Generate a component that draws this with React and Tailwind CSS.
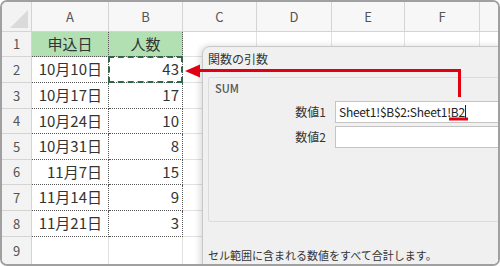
import React from "react";

const cols = ["A", "B", "C", "D", "E", "F", ""];
const rows = [
  ["10月10日", "43"],
  ["10月17日", "17"],
  ["10月24日", "10"],
  ["10月31日", "8"],
  ["11月7日", "15"],
  ["11月14日", "9"],
  ["11月21日", "3"],
];
const rowH = ["h-[25px]", "h-[26px]", "h-[26px]", "h-[25px]", "h-[26px]", "h-[25px]", "h-[26px]", "h-[26px]", "h-[28px]"];

const jp = "font-['Noto_Sans_CJK_JP',sans-serif]";

const Empty = () => <div className="border-r border-b border-[#e2e2e2] bg-white" />;

const Row = ({ n, h, children }) => (
  <div className="contents">
    <div className={`${h} flex items-center justify-center border-r border-b border-[#d4d4d4] bg-[#f3f3f3] text-[13px] text-[#555]`}>
      {n}
    </div>
    {children}
    <Empty />
    <Empty />
    <Empty />
    <Empty />
    <Empty />
  </div>
);

const Dialog = () => (
  <div className="absolute left-[200px] top-[44px] w-[320px] h-[240px] bg-[#f0f0f0] border border-[#c8c8c8] rounded-tl-[8px] shadow-[-2px_0_6px_rgba(0,0,0,0.15)] text-[#333]">
    <div className="h-[24px] pl-[5px] flex items-center text-[12px]">関数の引数</div>
    <div className="ml-[5px] mt-[6px] h-[145px] border border-[#dcdcdc] rounded-[2px]">
      <div className="pl-[6px] pt-[2px] text-[11px] text-[#555] font-medium">SUM</div>
      <div className="mt-[4px] flex flex-col gap-[3px]">
        <div className="flex items-center">
          <div className="w-[117px] text-right text-[12px]">数値1</div>
          <div className="ml-[9px] flex-1 h-[22px] bg-white border border-[#c4c4c4] pl-[3px] flex items-center text-[12px] tracking-[-0.25px] text-[#222]">
            Sheet1!$B$2:Sheet1!B2<span className="inline-block w-px h-[14px] bg-[#222]" />
          </div>
        </div>
        <div className="flex items-center">
          <div className="w-[117px] text-right text-[12px]">数値2</div>
          <div className="ml-[9px] flex-1 h-[22px] bg-white border border-[#c4c4c4]" />
        </div>
      </div>
    </div>
    <div className="pl-[5px] mt-[25px] text-[11px] text-[#333]">セル範囲に含まれる数値をすべて合計します。</div>
  </div>
);

const Arrow = () => (
  <svg className="absolute left-0 top-0 pointer-events-none" width="500" height="266" viewBox="0 0 500 266">
    <path d="M197 70.5 H459.5 V97" fill="none" stroke="#e00012" strokeWidth="3" />
    <polygon points="185,71 200,64.5 200,77.5" fill="#e00012" />
    <line x1="449" y1="119" x2="468" y2="119" stroke="#e00012" strokeWidth="3" />
  </svg>
);

export default function App() {
  return (
    <div className={`relative w-[500px] h-[266px] overflow-hidden bg-white ${jp}`}>
      <div className="relative w-full h-full border-2 border-[#a0a0a0] rounded-[7px] overflow-hidden">
        <div className="grid grid-cols-[30px_77px_74px_74px_75px_73px_75px_60px]">
          <div className="h-[30px] relative border-r border-b border-[#d4d4d4] bg-[#f3f3f3]">
            <div className="absolute right-[3px] bottom-[3px] w-0 h-0 border-l-[18px] border-l-transparent border-b-[18px] border-b-[#dadada]" />
          </div>
          {cols.map((c, i) => (
            <div key={i} className="h-[30px] flex items-center justify-center border-r border-b border-[#d4d4d4] bg-[#f7f7f7] text-[13px] text-[#555]">
              {c}
            </div>
          ))}
          <Row n="1" h={rowH[0]}>
            <div className="flex items-center justify-center bg-[#b2e0b2] border-r border-b border-dotted border-[#555] text-[15px] text-[#333]">申込日</div>
            <div className="flex items-center justify-center bg-[#b2e0b2] border-r border-b border-dotted border-[#555] text-[15px] text-[#333]">人数</div>
          </Row>
          {rows.map((r, i) => (
            <Row key={i} n={String(i + 2)} h={rowH[i + 1]}>
              <div className="flex items-center justify-end pr-[6px] bg-white border-r border-b border-dotted border-[#555] text-[15px] text-[#333]">{r[0]}</div>
              <div className={`flex items-center justify-end pr-[3px] bg-white border-r border-b border-dotted border-[#555] text-[15px] text-[#333] ${i === 0 ? "relative" : ""}`}>
                {r[1]}
                {i === 0 && <div className="absolute -left-px -top-px w-[75px] h-[27px] border-2 border-dashed border-[#2a6a45]" />}
              </div>
            </Row>
          ))}
          <Row n="9" h={rowH[8]}>
            <Empty />
            <Empty />
          </Row>
        </div>
        <Dialog />
      </div>
      <Arrow />
    </div>
  );
}
